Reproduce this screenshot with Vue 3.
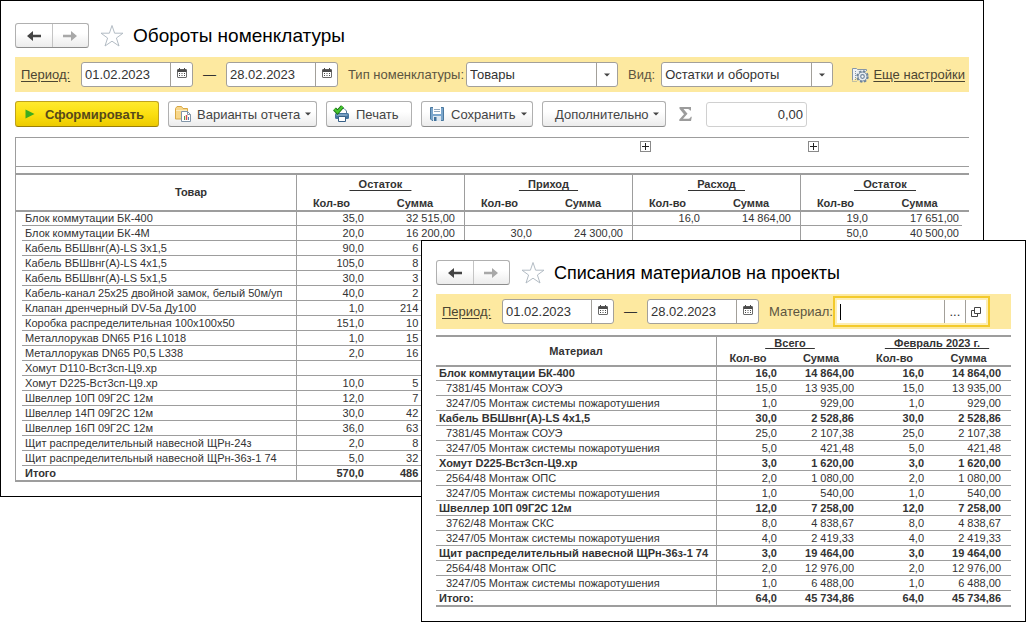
<script setup>
import { ref } from 'vue'

const periodFrom = ref('01.02.2023')
const periodTo = ref('28.02.2023')
const itemType = ref('Товары')
const view = ref('Остатки и обороты')
const total = ref('0,00')
const material = ref('')

const fixed = (value, digits) => {
  if (value === null || value === undefined) return ''
  const [whole, fraction] = value.toFixed(digits).split('.')
  return whole.replace(/\B(?=(\d{3})+$)/g, '\u00a0') + ',' + fraction
}
const quantity = (value) => fixed(value, 1)
const money = (value) => fixed(value, 2)

const turnoverGroups = ['Остаток', 'Приход', 'Расход', 'Остаток']
const none = [null, null]
const turnovers = [
  { name: 'Блок коммутации БК-400', values: [[35, 32515], none, [16, 14864], [19, 17651]] },
  { name: 'Блок коммутации БК-4М', values: [[20, 16200], [30, 24300], none, [50, 40500]] },
  { name: 'Кабель ВБШвнг(А)-LS 3x1,5', values: [[90, 6000], none, none, none] },
  { name: 'Кабель ВБШвнг(А)-LS 4x1,5', values: [[105, 8000], none, none, none] },
  { name: 'Кабель ВБШвнг(А)-LS 5x1,5', values: [[30, 3000], none, none, none] },
  { name: 'Кабель-канал 25х25 двойной замок, белый 50м/уп', values: [[40, 2000], none, none, none] },
  { name: 'Клапан дренчерный DV-5а Ду100', values: [[1, 214000], none, none, none] },
  { name: 'Коробка распределительная 100х100х50', values: [[151, 10000], none, none, none] },
  { name: 'Металлорукав DN65 P16 L1018', values: [[1, 15000], none, none, none] },
  { name: 'Металлорукав DN65 P0,5 L338', values: [[2, 16000], none, none, none] },
  { name: 'Хомут D110-Вст3сп-Ц9.хр', values: [none, none, none, none] },
  { name: 'Хомут D225-Вст3сп-Ц9.хр', values: [[10, 5000], none, none, none] },
  { name: 'Швеллер 10П 09Г2С 12м', values: [[12, 7000], none, none, none] },
  { name: 'Швеллер 14П 09Г2С 12м', values: [[30, 42000], none, none, none] },
  { name: 'Швеллер 16П 09Г2С 12м', values: [[36, 63000], none, none, none] },
  { name: 'Щит распределительный навесной ЩРн-24з', values: [[2, 8000], none, none, none] },
  { name: 'Щит распределительный навесной ЩРн-36з-1 74', values: [[5, 32000], none, none, none] },
  { name: 'Итого', bold: true, values: [[570, 486000], none, none, none] },
]

const writeOffGroups = ['Всего', 'Февраль 2023 г.']
const writeOffs = [
  { name: 'Блок коммутации БК-400', bold: true, qty: 16, sum: 14864 },
  { name: '7381/45 Монтаж СОУЭ', qty: 15, sum: 13935 },
  { name: '3247/05 Монтаж системы пожаротушения', qty: 1, sum: 929 },
  { name: 'Кабель ВБШвнг(А)-LS 4x1,5', bold: true, qty: 30, sum: 2528.86 },
  { name: '7381/45 Монтаж СОУЭ', qty: 25, sum: 2107.38 },
  { name: '3247/05 Монтаж системы пожаротушения', qty: 5, sum: 421.48 },
  { name: 'Хомут D225-Вст3сп-Ц9.хр', bold: true, qty: 3, sum: 1620 },
  { name: '2564/48 Монтаж ОПС', qty: 2, sum: 1080 },
  { name: '3247/05 Монтаж системы пожаротушения', qty: 1, sum: 540 },
  { name: 'Швеллер 10П 09Г2С 12м', bold: true, qty: 12, sum: 7258 },
  { name: '3762/48 Монтаж СКС', qty: 8, sum: 4838.67 },
  { name: '3247/05 Монтаж системы пожаротушения', qty: 4, sum: 2419.33 },
  { name: 'Щит распределительный навесной ЩРн-36з-1 74', bold: true, qty: 3, sum: 19464 },
  { name: '2564/48 Монтаж ОПС', qty: 2, sum: 12976 },
  { name: '3247/05 Монтаж системы пожаротушения', qty: 1, sum: 6488 },
  { name: 'Итого:', bold: true, qty: 64, sum: 45734.86 },
]
</script>

<template>
  <main class="desktop">
    <svg class="sprite" aria-hidden="true">
      <symbol id="arrow-left" viewBox="0 0 16 12">
        <path d="M1 6 L7 1 V4.8 H15 V7.2 H7 V11 Z" fill="currentColor" />
      </symbol>
      <symbol id="arrow-right" viewBox="0 0 16 12">
        <path d="M15 6 L9 1 V4.8 H1 V7.2 H9 V11 Z" fill="currentColor" />
      </symbol>
      <symbol id="star" viewBox="0 0 24 24">
        <path d="M12 1.5 L14.6 9.2 H23 L16.4 14 L19 22 L12 17.2 L5 22 L7.6 14 L1 9.2 H9.4 Z" fill="#fff" stroke="#b3bcc4" stroke-width="1" />
      </symbol>
      <symbol id="calendar" viewBox="0 0 10 11">
        <path d="M1 1.500 H9 Q9.500 1.500 9.500 2 V9 Q9.500 9.500 9 9.500 H1 Q.5 9.500 .5 9 V2 Q.5 1.500 1 1.500 Z" fill="#fff" stroke="#6b6b6b" />
        <path d="M.5 1.500 H9.500 V4 H.5 Z" fill="#4a4a4a" />
        <path d="M2.500 0 V2 M7.500 0 V2" stroke="#4a4a4a" />
        <path d="M2 5.500 H8 M2 7.500 H8" stroke="#4a4a4a" stroke-dasharray="1 1.5" />
      </symbol>
      <symbol id="caret" viewBox="0 0 6 4">
        <path d="M0 .5 H6 L3 3.5 Z" fill="#444" />
      </symbol>
    </svg>

    <section class="window turnover" aria-label="Обороты номенклатуры">
      <header class="head">
        <div class="nav">
          <button type="button" aria-label="Назад"><svg class="arrow"><use href="#arrow-left" /></svg></button>
          <button type="button" aria-label="Вперед" class="dim"><svg class="arrow"><use href="#arrow-right" /></svg></button>
        </div>
        <svg class="star"><use href="#star" /></svg>
        <h1>Обороты номенклатуры</h1>
      </header>

      <div class="filters">
        <a href="#" class="period">Период:</a>
        <div class="field date">
          <input v-model="periodFrom" type="text" aria-label="Начало периода" />
          <button type="button" aria-label="Выбрать дату"><svg class="cal"><use href="#calendar" /></svg></button>
        </div>
        <span class="dash">—</span>
        <div class="field date">
          <input v-model="periodTo" type="text" aria-label="Конец периода" />
          <button type="button" aria-label="Выбрать дату"><svg class="cal"><use href="#calendar" /></svg></button>
        </div>
        <label for="item-type" class="caption tight">Тип номенклатуры:</label>
        <div class="field combo type">
          <select id="item-type" v-model="itemType"><option>Товары</option></select>
          <span class="drop"><svg class="caret"><use href="#caret" /></svg></span>
        </div>
        <label for="view" class="caption">Вид:</label>
        <div class="field combo view">
          <select id="view" v-model="view"><option>Остатки и обороты</option></select>
          <span class="drop"><svg class="caret"><use href="#caret" /></svg></span>
        </div>
        <a href="#" class="more">
          <svg class="gear" viewBox="0 0 17 16">
            <path d="M.5 13.500 V1.500 H4.500 L5.500 2.500 H14.500 V4" fill="#eef1f4" stroke="#8696a6" />
            <path d="M.5 14.500 H5 M3.500 4 V13" stroke="#8696a6" fill="none" stroke-dasharray="1 1" />
            <circle cx="10.500" cy="9.500" r="5.300" fill="#e8edf2" stroke="#6f8499" stroke-width="1.800" stroke-dasharray="2.400 1.750" />
            <circle cx="10.500" cy="9.500" r="4.500" fill="#e8edf2" stroke="#6f8499" />
            <circle cx="10.500" cy="9.500" r="1.800" fill="#fff" stroke="#6f8499" stroke-width="1.200" />
          </svg>
          <span>Еще настройки</span>
        </a>
      </div>

      <div class="tools">
        <button type="button" class="btn primary">
          <svg class="play" viewBox="0 0 10 10"><path d="M.5 .5 L9.500 5 L.5 9.500 Z" fill="#3cac1f" /></svg>
          Сформировать
        </button>
        <button type="button" class="btn variants">
          <svg class="ico" viewBox="0 0 18 18">
            <path d="M1.500 14 V3.500 L3 1.500 H7.500 L9 3.500 H13.500 V14 Z" fill="#f8d78a" stroke="#d8a845" />
            <path d="M2 5.500 H13" stroke="#fdecc0" />
            <path d="M7.500 6.500 H13.500 L16.500 9.500 V16.500 H7.500 Z" fill="#fff" stroke="#8195a8" />
            <path d="M13.500 6.500 V9.500 H16.500" fill="none" stroke="#8195a8" />
            <path d="M10.500 15 V11" stroke="#5b9a4b" />
            <path d="M12.500 15 V10" stroke="#d4504a" stroke-width="1.500" />
            <path d="M14.500 15 V12" stroke="#4f7fb5" />
          </svg>
          Варианты отчета
          <svg class="caret"><use href="#caret" /></svg>
        </button>
        <button type="button" class="btn print">
          <svg class="ico" viewBox="0 0 18 18">
            <path d="M5.500 9 V3.500 H11 L13.500 6 V9" fill="#fff" stroke="#5d7c99" />
            <rect x="2" y="8" width="14" height="6" rx="1.500" fill="#44749f" />
            <path d="M3.500 10 H14.500" stroke="#a9c7e0" />
            <path d="M5.500 11.500 H12.500 V16.500 H5.500 Z" fill="#fff" stroke="#365f86" />
            <path d="M1.500 4 L4.500 7 L9.500 1.500" fill="none" stroke="#176d12" stroke-width="4" />
            <path d="M1.500 4 L4.500 7 L9.500 1.500" fill="none" stroke="#46c52f" stroke-width="2.400" />
          </svg>
          Печать
        </button>
        <button type="button" class="btn save">
          <svg class="ico" viewBox="0 0 18 18">
            <path d="M2.500 2.500 H15.500 V15.500 H4 L2.500 14 Z" fill="#7ba6cc" stroke="#4a789f" />
            <path d="M5 2 H13 V9 H5 Z" fill="#fff" />
            <path d="M6 4.500 H12 M6 6.500 H12" stroke="#92a9bf" />
            <path d="M5 11 H13 V16 H5 Z" fill="#dce7f0" />
            <path d="M6 12 H8.500 V16 H6 Z" fill="#41719b" />
          </svg>
          Сохранить
          <svg class="caret"><use href="#caret" /></svg>
        </button>
        <button type="button" class="btn extra">
          Дополнительно
          <svg class="caret"><use href="#caret" /></svg>
        </button>
        <svg class="sigma" viewBox="0 0 13 14">
          <path d="M.5 0 H12 V3.500 H11 Q10.500 2 9 2 H4.500 L8.500 6.800 L4 11.800 H9.500 Q11.300 11.800 11.800 9.800 H12.800 L12 14 H.3 V12.500 L5 7.300 L.5 1.700 Z" fill="#9c9c9c" />
        </svg>
        <input v-model="total" type="text" class="total" aria-label="Сумма" />
      </div>

      <table class="report wide">
        <colgroup>
          <col class="edge" />
          <col />
          <template v-for="(g, i) in turnoverGroups" :key="i">
            <col class="qty-col" />
            <col :class="i === 3 ? 'sum-col-last' : 'sum-col'" />
          </template>
          <col class="tail" />
        </colgroup>
        <thead>
          <tr class="outline">
            <td colspan="6"></td>
            <td colspan="2"><button type="button" class="plus" aria-label="Развернуть Расход"></button></td>
            <td colspan="3"><button type="button" class="plus" aria-label="Развернуть Остаток"></button></td>
          </tr>
          <tr class="gap"><td colspan="11"></td></tr>
          <tr class="groups">
            <th colspan="2" rowspan="2" class="goods">Товар</th>
            <th v-for="(g, i) in turnoverGroups" :key="i" :colspan="i === 3 ? 3 : 2" class="split">
              <u>&nbsp;&nbsp;&nbsp;{{ g }}&nbsp;&nbsp;&nbsp;</u>
            </th>
          </tr>
          <tr class="measures">
            <template v-for="(g, i) in turnoverGroups" :key="i">
              <th class="split">Кол-во</th>
              <th :colspan="i === 3 ? 2 : 1">Сумма</th>
            </template>
          </tr>
        </thead>
        <tbody>
          <tr v-for="(row, r) in turnovers" :key="r" :class="{ bold: row.bold }">
            <td class="blank"></td>
            <td class="name">{{ row.name }}</td>
            <template v-for="(pair, i) in row.values" :key="i">
              <td class="num qty split">{{ quantity(pair[0]) }}</td>
              <td class="num sum" :class="{ last: i === 3 }">{{ money(pair[1]) }}</td>
            </template>
            <td class="blank"></td>
          </tr>
        </tbody>
      </table>
    </section>

    <section class="window writeoff" aria-label="Списания материалов на проекты">
      <header class="head">
        <div class="nav">
          <button type="button" aria-label="Назад"><svg class="arrow"><use href="#arrow-left" /></svg></button>
          <button type="button" aria-label="Вперед" class="dim"><svg class="arrow"><use href="#arrow-right" /></svg></button>
        </div>
        <svg class="star"><use href="#star" /></svg>
        <h1>Списания материалов на проекты</h1>
      </header>

      <div class="filters">
        <a href="#" class="period">Период:</a>
        <div class="field date">
          <input v-model="periodFrom" type="text" aria-label="Начало периода" />
          <button type="button" aria-label="Выбрать дату"><svg class="cal"><use href="#calendar" /></svg></button>
        </div>
        <span class="dash">—</span>
        <div class="field date">
          <input v-model="periodTo" type="text" aria-label="Конец периода" />
          <button type="button" aria-label="Выбрать дату"><svg class="cal"><use href="#calendar" /></svg></button>
        </div>
        <label for="material" class="caption flush">Материал:</label>
        <div class="focus">
          <span class="cursor"></span>
          <input id="material" v-model="material" type="text" />
          <button type="button" aria-label="Выбрать">...</button>
          <button type="button" aria-label="Открыть">
            <svg class="open" viewBox="0 0 10 10">
              <path d="M3.500 .5 H9.500 V6.500 H3.500 Z" fill="none" stroke="#444" />
              <path d="M3.500 3.500 H.5 V9.500 H6.500 V6.500" fill="none" stroke="#444" />
            </svg>
          </button>
        </div>
      </div>

      <table class="report narrow">
        <colgroup>
          <col />
          <col class="qty-col" />
          <col class="sum-col" />
          <col class="qty-col" />
          <col class="sum-col-last" />
        </colgroup>
        <thead>
          <tr class="groups">
            <th rowspan="2">Материал</th>
            <th v-for="(g, i) in writeOffGroups" :key="g" colspan="2" :class="{ split: i === 0 }">
              <u>&nbsp;&nbsp;&nbsp;{{ g }}&nbsp;&nbsp;&nbsp;</u>
            </th>
          </tr>
          <tr class="measures">
            <template v-for="(g, i) in writeOffGroups" :key="g">
              <th :class="{ split: i === 0 }">Кол-во</th>
              <th>Сумма</th>
            </template>
          </tr>
        </thead>
        <tbody>
          <tr v-for="(row, r) in writeOffs" :key="r" :class="{ bold: row.bold }">
            <td class="name">{{ row.name }}</td>
            <template v-for="(g, i) in writeOffGroups" :key="g">
              <td class="num qty" :class="{ split: i === 0 }">{{ quantity(row.qty) }}</td>
              <td class="num sum" :class="{ last: i === 1 }">{{ money(row.sum) }}</td>
            </template>
          </tr>
        </tbody>
      </table>
    </section>
  </main>
</template>

<style>
body {
  margin: 0;
  background: #fff;
}
</style>

<style scoped>
.desktop {
  position: relative;
  min-height: 622px;
  font-family: "Liberation Sans", Arial, sans-serif;
  font-size: 13px;
  color: #333;
}
.desktop * {
  box-sizing: border-box;
}
.sprite {
  position: absolute;
  width: 0;
  height: 0;
}
svg {
  display: block;
  flex: none;
}
button,
input,
select {
  font: inherit;
  color: inherit;
  margin: 0;
  padding: 0;
  border: 0;
  background: none;
  outline: 0;
}
.window {
  background: #fff;
  border: 1px solid #000;
}
.turnover {
  margin-right: 42px;
  padding: 22px 14px 14px;
}
.writeoff {
  position: absolute;
  top: 240px;
  left: 421px;
  right: 0;
  padding: 19px 14px 14px;
}

.head {
  display: flex;
  align-items: center;
  height: 25px;
}
.nav {
  display: flex;
  width: 74px;
  height: 25px;
  border: 1px solid #b0b0b0;
  border-bottom-color: #8c8c8c;
  border-radius: 3px;
  background: linear-gradient(#fff, #fff 40%, #ececec);
}
.nav button {
  flex: 1;
  display: flex;
  align-items: center;
  justify-content: center;
  color: #444;
}
.nav .dim {
  color: #a8a8a8;
  border-left: 1px solid #c4c4c4;
}
.arrow {
  width: 16px;
  height: 12px;
}
.star {
  width: 24px;
  height: 24px;
  margin: 0 9px 0 11px;
}
h1 {
  margin: 0;
  font-size: 19px;
  line-height: 24px;
  font-weight: 400;
  color: #000;
  white-space: nowrap;
}
.writeoff h1 {
  font-size: 18px;
}

.filters {
  display: flex;
  align-items: center;
  height: 35px;
  margin-top: 9px;
  padding: 0 4px 0 6px;
  background: #fde9a0;
  white-space: nowrap;
}
.period {
  width: 60px;
  color: #4b4532;
  text-underline-offset: 2px;
}
.field {
  height: 25px;
  border: 1px solid #a3a09a;
  border-radius: 3px;
  background: #fff;
}
.date {
  display: flex;
  width: 112px;
}
.date input {
  flex: 1;
  min-width: 0;
  padding-left: 3px;
}
.date button {
  width: 22px;
  display: flex;
  align-items: center;
  justify-content: center;
  padding-bottom: 2px;
  border-left: 1px solid #a3a09a;
}
.cal {
  width: 10px;
  height: 11px;
}
.dash {
  width: 33px;
  text-align: center;
}
.caption {
  margin: 0 6px 0 10px;
  color: #5c5540;
}
.tight {
  margin-right: 2px;
}
.flush {
  margin-right: 0;
}
.combo {
  display: grid;
}
.combo select {
  grid-area: 1 / 1;
  width: 100%;
  padding: 0 22px 0 3px;
  appearance: none;
}
.drop {
  grid-area: 1 / 1;
  justify-self: end;
  width: 21px;
  display: flex;
  align-items: center;
  justify-content: center;
  border-left: 1px solid #a3a09a;
  pointer-events: none;
}
.type {
  width: 152px;
}
.view {
  width: 172px;
}
.caret {
  width: 6px;
  height: 4px;
}
.more {
  display: flex;
  align-items: center;
  gap: 4px;
  margin-left: auto;
  color: #4b4532;
  text-underline-offset: 2px;
}
.gear {
  width: 17px;
  height: 16px;
}
.focus {
  display: flex;
  align-items: center;
  width: 157px;
  height: 31px;
  padding: 2px;
  border: 2px solid #f3ca2c;
  background: linear-gradient(#fff, #fff) content-box, #fdeeb4;
}
.focus input {
  flex: 1;
  min-width: 0;
  height: 23px;
}
.focus button {
  width: 21px;
  height: 23px;
  display: flex;
  align-items: center;
  justify-content: center;
  border-left: 1px solid #a3a09a;
}
.cursor {
  width: 1px;
  height: 16px;
  margin-left: 3px;
  background: #000;
}
.open {
  width: 10px;
  height: 10px;
}

.tools {
  display: flex;
  align-items: center;
  gap: 9px;
  height: 26px;
  margin-top: 9px;
  white-space: nowrap;
}
.btn {
  display: flex;
  align-items: center;
  height: 26px;
  padding: 0 6px;
  border: 1px solid #b0b0b0;
  border-bottom-color: #8c8c8c;
  border-radius: 3px;
  background: linear-gradient(#fff, #fff 40%, #ececec);
  color: #444;
}
.btn .caret {
  margin-left: auto;
}
.ico {
  width: 18px;
  height: 18px;
}
.primary {
  width: 144px;
  padding-left: 9px;
  gap: 10px;
  font-weight: 700;
  border-color: #c0a31c;
  border-bottom-color: #9a7f08;
  background: linear-gradient(#ffea2e, #fbdf10 50%, #edcb00);
  color: #57491a;
}
.play {
  width: 10px;
  height: 10px;
}
.variants {
  width: 149px;
  gap: 5px;
  padding-left: 5px;
}
.print {
  width: 86px;
  gap: 5px;
}
.save {
  width: 112px;
  gap: 5px;
}
.extra {
  width: 124px;
  padding-left: 12px;
}
.sigma {
  width: 13px;
  height: 14px;
  margin: 0 5px 0 4px;
}
.total {
  width: 101px;
  height: 25px;
  padding-right: 3px;
  border: 1px solid #d0d0d0;
  border-radius: 3px;
  text-align: right;
}

.report {
  width: 100%;
  table-layout: fixed;
  border-collapse: separate;
  border-spacing: 0;
  font-size: 11px;
  line-height: 13px;
  white-space: nowrap;
}
.report th,
.report td {
  padding: 0;
}
.wide {
  margin-top: 10px;
  border-left: 1px solid #9d9d9d;
  border-top: 1px solid #9d9d9d;
}
.narrow {
  margin-top: 6px;
  border-top: 2px solid #9d9d9d;
}
.edge {
  width: 6px;
}
.tail {
  width: 7px;
}
.qty-col {
  width: 70px;
}
.sum-col {
  width: 98px;
}
.sum-col-last {
  width: 92px;
}
.narrow .qty-col {
  width: 63px;
}
.narrow .sum-col {
  width: 84px;
}
.narrow .sum-col-last {
  width: 85px;
}
.report .outline td {
  height: 29px;
  padding: 3px 0 0 8px;
  vertical-align: top;
  border-bottom: 1px solid #9d9d9d;
}
.gap td {
  height: 8px;
  border-bottom: 2px solid #9d9d9d;
}
.plus {
  display: block;
  width: 11px;
  height: 11px;
  border: 1px solid #8a8a8a;
  background:
    linear-gradient(#222, #222) center / 7px 1px no-repeat,
    linear-gradient(#222, #222) center / 1px 7px no-repeat;
}
.groups th {
  height: 19px;
}
.report .goods {
  padding-left: 70px;
}
.groups th[rowspan],
.measures th {
  border-bottom: 2px solid #9d9d9d;
}
.report .measures th {
  height: 18px;
  padding-top: 2px;
}
.narrow .groups th {
  height: 13px;
}
.report.narrow .measures th {
  height: 17px;
}
u {
  text-underline-offset: 2px;
}
.narrow u {
  text-underline-offset: 1px;
}
.report .split {
  border-left: 1px solid #9d9d9d;
}
tbody td {
  height: 15px;
  border-bottom: 1px solid #9d9d9d;
}
tbody tr:first-child td {
  height: 14px;
}
tbody tr:last-child td {
  height: 16px;
  border-bottom: 2px solid #9d9d9d;
}
tbody tr:not(:last-child) .blank {
  border-bottom: 0;
}
.wide .name {
  padding-left: 3px;
}
.narrow .name {
  padding-left: 10px;
}
.narrow .bold .name {
  padding-left: 3px;
}
.bold {
  font-weight: 700;
}
.num {
  text-align: right;
}
.report .qty {
  padding-right: 2px;
}
.report .sum {
  padding-right: 9px;
}
.wide .last {
  padding-right: 3px;
}
.narrow .last {
  padding-right: 10px;
}
</style>
